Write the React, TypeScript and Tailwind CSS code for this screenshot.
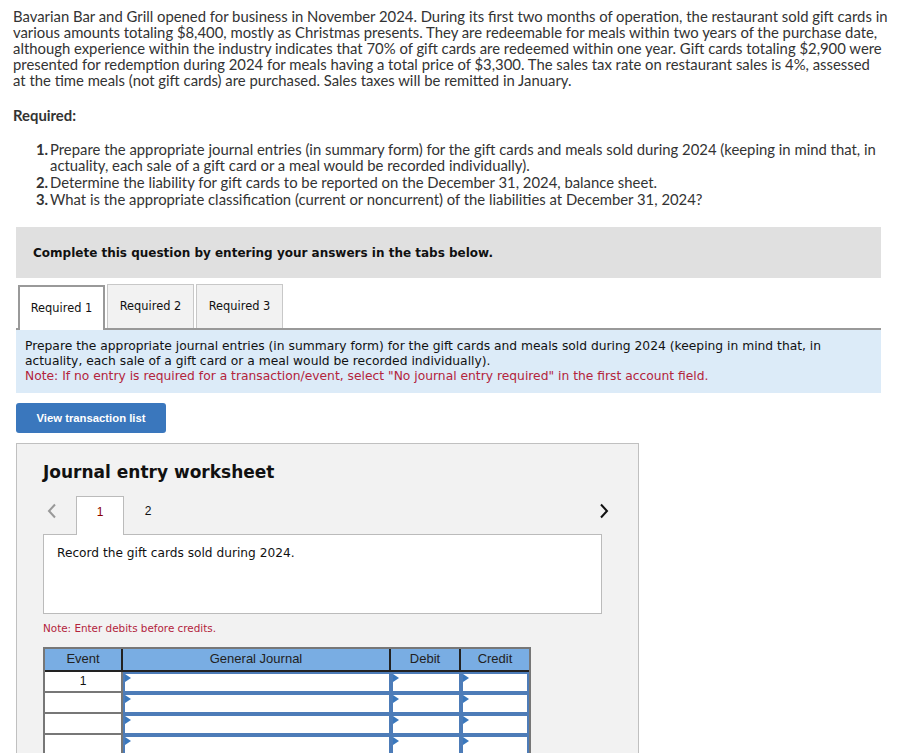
const rows = [1, 2, 3, 4]

const intro = [
  'Bavarian Bar and Grill opened for business in November 2024. During its first two months of operation, the restaurant sold gift cards in',
  'various amounts totaling $8,400, mostly as Christmas presents. They are redeemable for meals within two years of the purchase date,',
  'although experience within the industry indicates that 70% of gift cards are redeemed within one year. Gift cards totaling $2,900 were',
  'presented for redemption during 2024 for meals having a total price of $3,300. The sales tax rate on restaurant sales is 4%, assessed',
  'at the time meals (not gift cards) are purchased. Sales taxes will be remitted in January.',
]

const Flag = () => (
  <span className="absolute left-0 top-0 w-0 h-0 border-t-[4px] border-b-[4px] border-l-[6px] border-t-transparent border-b-transparent border-l-[#3a78bd]" />
)

const InputCell = ({ w }: { w: string }) => (
  <div className={`relative ${w} h-[21px] border-2 border-[#4d7cb8] bg-white`}>
    <Flag />
  </div>
)

export default function App() {
  return (
    <div className="w-[905px] h-[753px] overflow-hidden bg-white text-[#222]">
      <div className="px-[13px] pt-[8px] font-['Lato',sans-serif] text-[14.85px] leading-[16px] text-[#333]">
        <div>
          {intro.map((line) => (
            <div key={line} className="whitespace-nowrap">
              {line}
            </div>
          ))}
        </div>
        <p className="mt-[19px] font-bold">Required:</p>
        <ol className="mt-[18px] pl-[23px] space-y-[1px]">
          <li className="flex">
            <span className="w-[14px] font-bold">1.</span>
            <div>
              <div className="whitespace-nowrap">
                Prepare the appropriate journal entries (in summary form) for the gift cards and meals sold during 2024 (keeping in mind that, in
              </div>
              <div>actuality, each sale of a gift card or a meal would be recorded individually).</div>
            </div>
          </li>
          <li className="flex">
            <span className="w-[14px] font-bold">2.</span>
            <span>Determine the liability for gift cards to be reported on the December 31, 2024, balance sheet.</span>
          </li>
          <li className="flex">
            <span className="w-[14px] font-bold">3.</span>
            <span>What is the appropriate classification (current or noncurrent) of the liabilities at December 31, 2024?</span>
          </li>
        </ol>
      </div>

      <div className="font-['DejaVu_Sans',Verdana,sans-serif] text-[12.3px]">
        <div className="mt-[20px] ml-[16px] w-[865px] h-[51px] bg-[#e0e0e0] flex items-center pl-[17px] font-bold text-[12px] text-[#111]">
          Complete this question by entering your answers in the tabs below.
        </div>

        <div className="ml-[16px] w-[865px] mt-[6px]">
          <div className="flex gap-[2px] items-end pl-[2px] border-b-2 border-[#999]">
            <div className="w-[87px] h-[45px] -mb-[2px] bg-white border-2 border-b-0 border-[#999] flex items-center justify-center text-[11.4px] text-[#111]">
              Required 1
            </div>
            <div className="w-[87px] h-[44px] bg-[#f2f2f2] border border-b-0 border-[#c8c8c8] flex items-center justify-center text-[11.4px] text-[#111]">
              Required 2
            </div>
            <div className="w-[87px] h-[44px] bg-[#f2f2f2] border border-b-0 border-[#c8c8c8] flex items-center justify-center text-[11.4px] text-[#111]">
              Required 3
            </div>
          </div>
          <div className="bg-[#dcebf8] h-[63px] pl-[9px] pt-[9px] text-[12.3px] leading-[15px] text-[#111]">
            <p>
              Prepare the appropriate journal entries (in summary form) for the gift cards and meals sold during 2024 (keeping in mind that, in
              <br />
              actuality, each sale of a gift card or a meal would be recorded individually).
            </p>
            <p className="text-[#b3243c]">
              Note: If no entry is required for a transaction/event, select &quot;No journal entry required&quot; in the first account field.
            </p>
          </div>
        </div>

        <button className="mt-[10px] ml-[16px] w-[150px] h-[30px] bg-[#3a77bd] rounded-[3px] text-white text-[11.3px] font-bold font-['Liberation_Sans',Arial,sans-serif]">
          View transaction list
        </button>

        <div className="mt-[10px] ml-[16px] w-[623px] h-[320px] bg-[#f2f2f2] border border-[#c0c0c0] pl-[26px] pt-[17px]">
          <h2 className="text-[17px] font-bold text-[#111] leading-[22px]">Journal entry worksheet</h2>

          <div className="mt-[12px] w-[566px] flex items-end">
            <div className="w-[33px] h-[39px] flex items-center pl-[4px] pb-[8px]">
              <svg width="10" height="16" viewBox="0 0 10 16" fill="none">
                <path d="M8 1.5 L2 8 L8 14.5" stroke="#999" strokeWidth="2" />
              </svg>
            </div>
            <div className="w-[48px] h-[39px] -mb-px bg-white border border-b-0 border-[#bbb] flex items-center justify-center pb-[8px] text-[12px] font-['Liberation_Sans',Arial,sans-serif] text-[#8b0000] relative z-10">
              1
            </div>
            <div className="w-[48px] h-[39px] flex items-center justify-center pb-[8px] text-[12px] font-['Liberation_Sans',Arial,sans-serif] text-[#111]">
              2
            </div>
            <div className="flex-1 h-[39px] flex items-center justify-end pb-[8px]">
              <svg width="10" height="16" viewBox="0 0 10 16" fill="none">
                <path d="M2 1.5 L8 8 L2 14.5" stroke="#111" strokeWidth="2" />
              </svg>
            </div>
          </div>
          <div className="w-[559px] h-[80px] bg-white border border-[#bbb] pl-[13px] pt-[9px] text-[12.2px] text-[#111]">
            Record the gift cards sold during 2024.
          </div>

          <p className="mt-[7px] text-[10.4px] text-[#b3243c]">Note: Enter debits before credits.</p>

          <div className="mt-[10px] w-[488px] border-2 border-b-0 border-[#777] font-['Liberation_Sans',Arial,sans-serif] text-[13px]">
            <div className="flex h-[23px] bg-[#79ade3] text-[#222] border-b-2 border-[#222]">
              <div className="w-[78px] flex items-center justify-center border-r-2 border-[#222]">Event</div>
              <div className="w-[268px] flex items-center justify-center border-r-2 border-[#222]">General Journal</div>
              <div className="w-[70px] flex items-center justify-center border-r-2 border-[#222]">Debit</div>
              <div className="flex-1 flex items-center justify-center">Credit</div>
            </div>
            {rows.map((r) => (
              <div key={r} className="flex">
                <div className="w-[78px] h-[21px] border-r-2 border-b-2 border-[#777] bg-white flex items-center justify-center text-[12px] text-[#111]">
                  {r === 1 ? '1' : ''}
                </div>
                <InputCell w="w-[268px]" />
                <InputCell w="w-[70px]" />
                <InputCell w="flex-1" />
              </div>
            ))}
          </div>
        </div>
      </div>
    </div>
  )
}
